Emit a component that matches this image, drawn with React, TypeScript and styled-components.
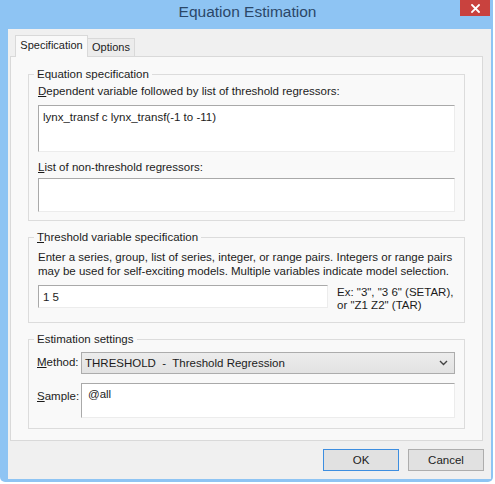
import styled, { createGlobalStyle } from "styled-components";

const GlobalStyle = createGlobalStyle`
  html, body {
    margin: 0;
    padding: 0;
    background: #ffffff;
  }
  body {
    font-family: "Segoe UI", "Liberation Sans", Arial, sans-serif;
    font-size: 11.5px;
    color: #1c1c1c;
  }
`;

const App = () => {
  return (
    <>
      <GlobalStyle />
      <Window>
        <TitleBar>
          <Title>Equation Estimation</Title>
          <CloseButton aria-label="close">
            <svg width="9" height="9" viewBox="0 0 9 9">
              <path d="M1 1 L8 8 M8 1 L1 8" stroke="#fff" strokeWidth="1.8" strokeLinecap="square" />
            </svg>
          </CloseButton>
        </TitleBar>
        <Body>
          <Tabs>
            <Tab active width={73}>Specification</Tab>
            <Tab width={48}>Options</Tab>
          </Tabs>
          <Panel>
            <Group>
              <Legend>Equation specification</Legend>
              <FieldLabel>
                <u>D</u>ependent variable followed by list of threshold regressors:
              </FieldLabel>
              <TextBox height={47} top={6}>lynx_transf c lynx_transf(-1 to -11)</TextBox>
              <FieldLabel top={8}>
                <u>L</u>ist of non-threshold regressors:
              </FieldLabel>
              <TextBox height={34} top={3}></TextBox>
            </Group>

            <Group bottom={10}>
              <Legend>
                <u>T</u>hreshold variable specification
              </Legend>
              <Hint>
                Enter a series, group, list of series, integer, or range pairs. Integers or range pairs
                may be used for self-exciting models. Multiple variables indicate model selection.
              </Hint>
              <InputRow>
                <LineInput>1 5</LineInput>
                <Example>
                  Ex: "3", "3 6" (SETAR),
                  <br />
                  or "Z1 Z2" (TAR)
                </Example>
              </InputRow>
            </Group>

            <Group bottom={10}>
              <Legend>Estimation settings</Legend>
              <SettingRow top={3}>
                <RowLabel>
                  <u>M</u>ethod:
                </RowLabel>
                <Dropdown>
                  <span>THRESHOLD  -  Threshold Regression</span>
                  <svg width="9" height="6" viewBox="0 0 9 6">
                    <path d="M1 1 L4.5 4.5 L8 1" fill="none" stroke="#444" strokeWidth="1.4" />
                  </svg>
                </Dropdown>
              </SettingRow>
              <SettingRow top={9}>
                <RowLabel pad={6}>
                  <u>S</u>ample:
                </RowLabel>
                <SampleBox>@all</SampleBox>
              </SettingRow>
            </Group>
          </Panel>
          <Footer>
            <Button primary>OK</Button>
            <Button>Cancel</Button>
          </Footer>
        </Body>
      </Window>
    </>
  );
};

const Window = styled.div`
  width: 493px;
  height: 482px;
  background: #8ec4f3;
  border-radius: 0 0 5px 5px;
  display: flex;
  flex-direction: column;
`;

const TitleBar = styled.div`
  height: 29px;
  flex-shrink: 0;
  position: relative;
  display: flex;
  align-items: center;
  justify-content: center;
`;

const Title = styled.div`
  font-size: 15.5px;
  color: #2b4768;
  margin-top: -5px;
  margin-left: 2px;
`;

const CloseButton = styled.div`
  position: absolute;
  top: 0;
  left: 460px;
  width: 30px;
  height: 16px;
  background: #c9423e;
  display: flex;
  align-items: center;
  justify-content: center;
`;

const Body = styled.div`
  flex: 1;
  margin: 0 2px 3px 8px;
  background: #f0f0f0;
  padding: 6px 8px 0 2px;
  display: flex;
  flex-direction: column;
`;

const Tabs = styled.div`
  display: flex;
  align-items: flex-end;
  padding-left: 5px;
  height: 22px;
  position: relative;
  z-index: 1;
  margin-bottom: -1px;
`;

const Tab = styled.div<{ active?: boolean; width: number }>`
  width: ${(p) => p.width}px;
  height: ${(p) => (p.active ? "22px" : "19px")};
  box-sizing: border-box;
  border: 1px solid #d9d9d9;
  border-bottom: ${(p) => (p.active ? "none" : "1px solid #d9d9d9")};
  margin-left: ${(p) => (p.active ? "0" : "-1px")};
  background: ${(p) => (p.active ? "#f9f9f9" : "#ececec")};
  display: flex;
  align-items: center;
  justify-content: center;
  font-size: 11px;
  line-height: 15px;
  padding-bottom: ${(p) => (p.active ? "2px" : "0")};
  white-space: nowrap;
`;

const Panel = styled.div`
  height: 385px;
  box-sizing: border-box;
  border: 1px solid #d9d9d9;
  background: #f9f9f9;
  padding: 10px 17px 0 17px;
  display: flex;
  flex-direction: column;
  gap: 9px;
`;

const Group = styled.fieldset<{ bottom?: number }>`
  margin: 0;
  border: 1px solid #dcdcdc;
  padding: 2px 9px ${(p) => p.bottom ?? 8}px 9px;
  min-width: 0;
  display: flex;
  flex-direction: column;
`;

const Legend = styled.legend`
  margin-left: -4px;
  padding: 0 3px;
  line-height: 15px;
  u {
    text-underline-offset: 1px;
  }
`;

const FieldLabel = styled.div<{ top?: number }>`
  line-height: 15px;
  margin-top: ${(p) => p.top ?? 0}px;
  u {
    text-underline-offset: 1px;
  }
`;

const TextBox = styled.div<{ height: number; top: number }>`
  height: ${(p) => p.height}px;
  margin-top: ${(p) => p.top}px;
  box-sizing: border-box;
  background: #ffffff;
  border-top: 1px solid #a9a9a9;
  border-left: 1px solid #a9a9a9;
  border-right: 1px solid #ececec;
  border-bottom: 1px solid #ececec;
  padding: 4px 4px;
  line-height: 15px;
`;

const Hint = styled.div`
  margin-top: 3px;
  line-height: 14px;
`;

const InputRow = styled.div`
  display: flex;
  align-items: flex-start;
  gap: 9px;
  margin-top: 7px;
`;

const LineInput = styled.div`
  width: 290px;
  flex-shrink: 0;
  height: 23px;
  box-sizing: border-box;
  background: #ffffff;
  border-top: 1px solid #a9a9a9;
  border-left: 1px solid #a9a9a9;
  border-right: 1px solid #ececec;
  border-bottom: 1px solid #ececec;
  padding: 0 4px;
  display: flex;
  align-items: center;
`;

const Example = styled.div`
  line-height: 13px;
  padding-top: 1px;
  white-space: nowrap;
`;

const SettingRow = styled.div<{ top?: number }>`
  display: flex;
  align-items: flex-start;
  margin-top: ${(p) => p.top ?? 0}px;
`;

const RowLabel = styled.div<{ pad?: number }>`
  width: 44px;
  flex-shrink: 0;
  line-height: 15px;
  padding-top: ${(p) => p.pad ?? 3}px;
  margin-left: -1px;
  u {
    text-underline-offset: 1px;
  }
`;

const Dropdown = styled.div`
  flex: 1;
  height: 22px;
  box-sizing: border-box;
  border: 1px solid #acacac;
  background: linear-gradient(#ececec, #e2e2e2);
  display: flex;
  align-items: center;
  justify-content: space-between;
  padding: 0 6px 0 3px;
  span {
    white-space: pre;
  }
`;

const SampleBox = styled(TextBox).attrs({ height: 35, top: 0 })`
  flex: 1;
  padding: 3px 6px;
`;

const Footer = styled.div`
  display: flex;
  justify-content: flex-end;
  gap: 9px;
  margin-top: 8px;
  margin-right: -1px;
`;

const Button = styled.div<{ primary?: boolean }>`
  width: 76px;
  height: 22px;
  box-sizing: border-box;
  border: 1px solid ${(p) => (p.primary ? "#3d8ee0" : "#adadad")};
  background: #e1e1e1;
  display: flex;
  align-items: center;
  justify-content: center;
`;

export default App;
